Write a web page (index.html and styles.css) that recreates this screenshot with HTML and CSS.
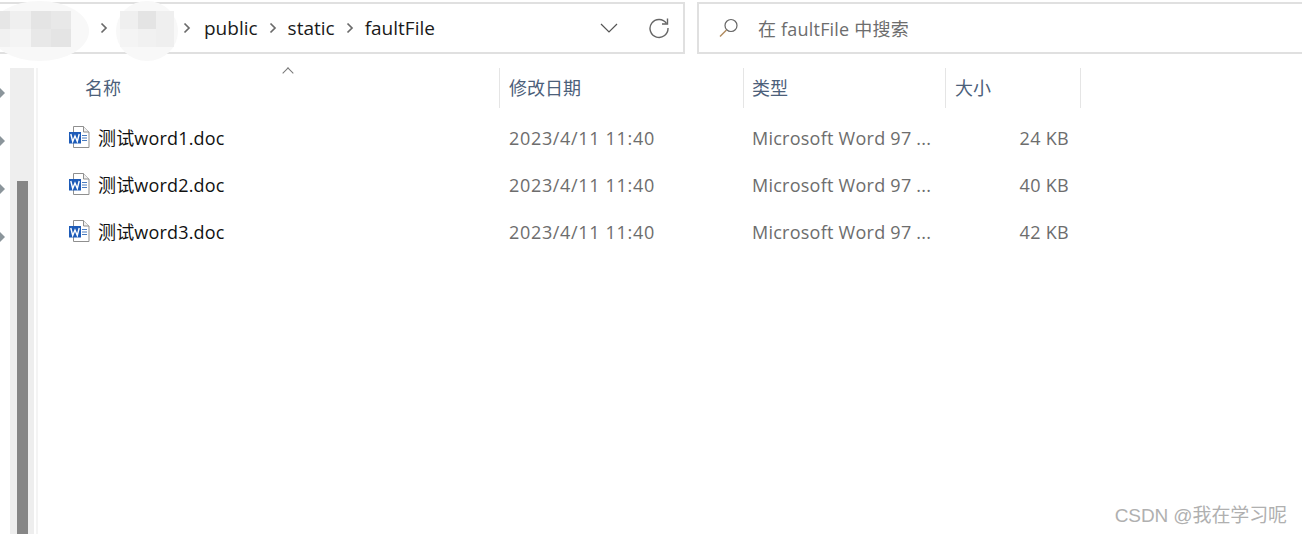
FILE: index.html
```html
<!DOCTYPE html>
<html lang="zh-CN">
  <head>
    <meta charset="UTF-8" />
    <title>faultFile</title>
    <link rel="stylesheet" href="styles.css">
  </head>
  <body>
    <svg width="0" height="0" class="defs">
      <symbol id="wordIcon" viewBox="0 0 22 22">
        <path d="M4.500 0.500h10l5.500 5.500v15.500h-15.500z" fill="#fff" stroke="#8f8f8f" />
        <path d="M14.500 0.500v5.500h5.500" fill="#f0f0f0" stroke="#8f8f8f" />
        <path d="M13 9.500h5M13 12h5M13 14.500h5" stroke="#4a7cc0" />
        <rect x="0" y="6" width="12" height="11.500" fill="#1d5bb8" />
        <path d="M1.800 8l1.900 7.500 2.300-5.500 2.300 5.500 1.900-7.500" fill="none" stroke="#fff" stroke-width="1.400" />
      </symbol>
      <symbol id="chevronRight" viewBox="0 0 10 12">
        <path d="M2.500 1.500L7 6l-4.500 4.500" fill="none" stroke="#6a6a6a" stroke-width="1.700" />
      </symbol>
    </svg>

    <div class="toolbar">
      <div class="address">
        <div class="crumb crumb-first">
          <svg class="sep"><use href="#chevronRight" /></svg>
        </div>
        <div class="crumb crumb-second">
          <svg class="sep"><use href="#chevronRight" /></svg>
        </div>
        <span class="crumb-name">public</span>
        <svg class="sep"><use href="#chevronRight" /></svg>
        <span class="crumb-name">static</span>
        <svg class="sep"><use href="#chevronRight" /></svg>
        <span class="crumb-name">faultFile</span>
        <div class="address-actions">
          <svg width="18" height="10" viewBox="0 0 18 10">
            <path d="M1 1l8 8 8-8" fill="none" stroke="#555" stroke-width="1.200" />
          </svg>
          <svg width="22" height="22" viewBox="0 0 22 22">
            <path d="M18.500 6.500A9 9 0 1 0 20 11" fill="none" stroke="#666" stroke-width="1.400" />
            <path d="M19.500 1.500v5.500h-5.500" fill="none" stroke="#666" stroke-width="1.400" />
          </svg>
        </div>
      </div>
      <div class="search">
        <svg width="20" height="20" viewBox="0 0 20 20">
          <circle cx="12" cy="7.500" r="6" fill="none" stroke="#666" stroke-width="1.200" />
          <path d="M7.500 12L1 18.500" stroke="#b08a5e" stroke-width="1.400" />
        </svg>
        <span>在 faultFile 中搜索</span>
      </div>
    </div>

    <!-- mosaic over the blanked out path segments -->
    <div class="blur-blob blob-one">
      <div class="mosaic mosaic-one">
        <i class="t1"></i><i class="t2"></i><i class="t3"></i><i class="t4"></i>
        <i class="t5"></i><i class="t6"></i><i class="t4"></i><i class="t3"></i>
      </div>
    </div>
    <div class="blur-blob blob-two">
      <div class="mosaic mosaic-two">
        <i class="t2"></i><i class="t3"></i><i class="t2"></i>
        <i class="t6"></i><i class="t5"></i><i class="t2"></i>
      </div>
    </div>

    <div class="main">
      <div class="nav-pane">
        <div class="nav-arrows">
          <i></i><i></i><i></i><i></i>
        </div>
        <div class="scroll-track"><div class="scroll-thumb"></div></div>
        <div class="pane-line"></div>
      </div>
      <div class="files">
        <div class="row head">
          <div class="col col-name">名称<span class="sort-arrow"></span></div>
          <div class="col col-date">修改日期</div>
          <div class="col col-type">类型</div>
          <div class="col col-size">大小</div>
        </div>
        <div class="row item">
          <div class="col col-name"><svg class="file-icon"><use href="#wordIcon" /></svg>测试word1.doc</div>
          <div class="col col-date">2023/4/11 11:40</div>
          <div class="col col-type">Microsoft Word 97 ...</div>
          <div class="col col-size">24 KB</div>
        </div>
        <div class="row item">
          <div class="col col-name"><svg class="file-icon"><use href="#wordIcon" /></svg>测试word2.doc</div>
          <div class="col col-date">2023/4/11 11:40</div>
          <div class="col col-type">Microsoft Word 97 ...</div>
          <div class="col col-size">40 KB</div>
        </div>
        <div class="row item">
          <div class="col col-name"><svg class="file-icon"><use href="#wordIcon" /></svg>测试word3.doc</div>
          <div class="col col-date">2023/4/11 11:40</div>
          <div class="col col-type">Microsoft Word 97 ...</div>
          <div class="col col-size">42 KB</div>
        </div>
      </div>
    </div>

    <div class="watermark">CSDN @我在学习呢</div>
  </body>
</html>
```

FILE: styles.css
```css
html,
body {
  margin: 0;
  padding: 0;
  height: 534px;
  overflow: hidden;
  background-color: #ffffff;
  font-family: "Open Sans", "Noto Sans CJK SC", sans-serif;
  font-size: 18px;
  position: relative;
}
.defs {
  position: absolute;
}
.toolbar {
  display: flex;
  gap: 12px;
  padding-top: 2px;
  height: 52px;
  box-sizing: border-box;
}
.address {
  width: 685px;
  height: 52px;
  box-sizing: border-box;
  border: 2px solid #e0e0e0;
  border-left: none;
  display: flex;
  align-items: center;
  color: #1a1a1a;
  font-size: 19px;
}
.crumb {
  display: flex;
  justify-content: flex-end;
}
.crumb-first {
  width: 109px;
}
.crumb-second {
  width: 83px;
  margin-right: 12px;
}
.sep {
  width: 10px;
  height: 12px;
  flex: none;
  margin: 0 10px 0 10px;
}
.crumb .sep {
  margin: 0;
}
.address-actions {
  margin-left: auto;
  display: flex;
  align-items: center;
  gap: 30px;
  padding-right: 13px;
}
.search {
  flex: 1;
  height: 52px;
  box-sizing: border-box;
  border: 2px solid #e0e0e0;
  border-right: none;
  display: flex;
  align-items: center;
  gap: 19px;
  padding-left: 20px;
  color: #6d6d6d;
  font-size: 18px;
  letter-spacing: 0.2px;
}
.blur-blob {
  position: absolute;
  top: 1px;
  height: 60px;
  background: #f8f8f8;
  border-radius: 50%;
}
.blob-one {
  left: -10px;
  width: 99px;
}
.blob-two {
  left: 116px;
  width: 62px;
}
.mosaic {
  position: absolute;
  top: 10px;
  height: 36px;
  display: grid;
  grid-template-rows: 18px 18px;
}
.mosaic-one {
  left: 0;
  width: 81px;
  grid-template-columns: repeat(4, 1fr);
}
.mosaic-two {
  left: 4px;
  width: 54px;
  grid-template-columns: repeat(3, 1fr);
}
.t1 {
  background: #e6e6e6;
}
.t2 {
  background: #efefef;
}
.t3 {
  background: #e4e4e4;
}
.t4 {
  background: #e8e8e8;
}
.t5 {
  background: #f1f1f1;
}
.t6 {
  background: #f4f4f4;
}
.main {
  display: flex;
  padding-top: 16px;
}
.nav-pane {
  position: relative;
  flex: none;
  width: 38px;
  height: 466px;
  display: flex;
}
.nav-arrows {
  width: 10px;
  display: flex;
  flex-direction: column;
  gap: 38px;
  padding-top: 20px;
}
.nav-arrows i {
  display: block;
  width: 0;
  height: 0;
  border-left: 5px solid #8b959b;
  border-top: 5px solid transparent;
  border-bottom: 5px solid transparent;
}
.scroll-track {
  width: 25px;
  background: #eeeeee;
  padding-top: 113px;
  box-sizing: border-box;
}
.scroll-thumb {
  width: 11px;
  height: 100%;
  margin-left: 7px;
  background: #868686;
}
.pane-line {
  width: 2px;
  margin-left: 2px;
  background: #f4f4f4;
}
.files {
  flex: 1;
}
.row {
  display: flex;
  align-items: center;
}
.col {
  flex: none;
  box-sizing: border-box;
  white-space: nowrap;
}
.col-name {
  width: 461px;
  padding-left: 31px;
}
.col-date {
  width: 244px;
  padding-left: 10px;
}
.col-type {
  width: 202px;
  padding-left: 9px;
}
.col-size {
  width: 136px;
  padding-left: 9px;
}
.head {
  height: 40px;
  color: #4c607a;
  margin-bottom: 6px;
}
.head .col {
  height: 40px;
  line-height: 40px;
  position: relative;
}
.head .col-date,
.head .col-type,
.head .col-size {
  border-left: 1px solid #e5e5e5;
}
.head .col-date {
  padding-left: 9px;
}
.head .col-type {
  padding-left: 8px;
}
.head .col-size {
  border-right: 1px solid #e5e5e5;
}
.head .col-name {
  padding-left: 47px;
}
.sort-arrow {
  position: absolute;
  left: 246px;
  top: 1px;
  width: 7px;
  height: 7px;
  border-left: 1px solid #777;
  border-top: 1px solid #777;
  transform: rotate(45deg);
}
.item {
  height: 47px;
  color: #6d6d6d;
}
.item .col-name {
  display: flex;
  align-items: center;
  gap: 7px;
  padding-bottom: 2px;
  color: #111111;
  letter-spacing: 0.17px;
}
.item .col-date {
  letter-spacing: 0.67px;
}
.item .col-type {
  letter-spacing: 0.25px;
}
.item .col-size {
  text-align: right;
  padding-right: 12px;
  letter-spacing: 0.3px;
}
.file-icon {
  width: 22px;
  height: 22px;
  flex: none;
}
.watermark {
  position: absolute;
  right: 15px;
  bottom: 7px;
  color: #b0b0b0;
  font-family: "Liberation Sans", "Noto Sans CJK SC", sans-serif;
  font-size: 19px;
  letter-spacing: -0.1px;
}
```
